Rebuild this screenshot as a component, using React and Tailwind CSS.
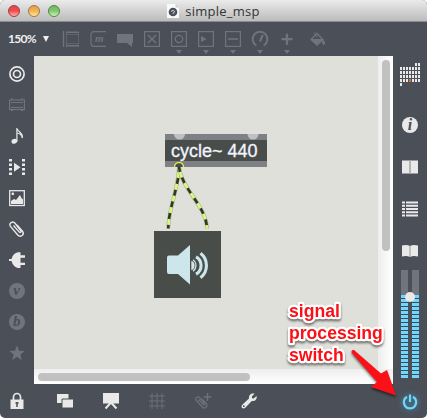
import React from "react";

function Icon({ children, className = "", size = 16 }) {
  return (
    <svg width={size} height={size} viewBox="0 0 16 16" fill="none" className={`block shrink-0 overflow-visible ${className}`}>
      {children}
    </svg>
  );
}

const square = <rect x=".6" y=".6" width="14.8" height="14.8" stroke="currentColor" strokeWidth="1.2" />;

const tools = [
  {
    art: (
      <g stroke="currentColor">
        <path d="M.5 0v16M3 1.300h13M3 14.700h13" strokeWidth="1.4" />
        <path d="M3 3.500h13M3 12.500h13M3.500 1v15M15.500 1v15" strokeWidth=".8" opacity=".7" />
      </g>
    ),
  },
  {
    art: (
      <>
        <path d="M16 .7H4Q1 .7 1 3.700v8.600Q1 15.300 4 15.300h12" stroke="currentColor" strokeWidth="1.2" />
        <text x="5" y="11.300" fill="currentColor" className="font-['Liberation_Serif',serif] text-[11px] font-bold italic">m</text>
      </>
    ),
  },
  { art: <path d="M0 3h16v9h-1v4l-5-4H0z" fill="currentColor" /> },
  { art: <>{square}<path d="M4 4l8 8M12 4l-8 8" stroke="currentColor" strokeWidth="1.4" /></> },
  { menu: true, art: <>{square}<circle cx="8" cy="8" r="3.700" stroke="currentColor" strokeWidth="1.3" /></> },
  { menu: true, art: <>{square}<path d="M3 5l5.500 3L3 11z" fill="currentColor" /></> },
  { menu: true, art: <>{square}<path d="M3 8h10" stroke="currentColor" strokeWidth="1.4" /></> },
  {
    menu: true,
    art: <path d="M4.300 14.500A7.400 7.400 0 1 1 11.700 14.500M8 10.500l2.700-6.500" stroke="currentColor" strokeWidth="2" />,
  },
  { menu: true, art: <path d="M8 2.700v11M2.500 8.200h11" stroke="currentColor" strokeWidth="2.300" /> },
];

const sideIcons = [
  { art: <g stroke="currentColor" strokeWidth="1.700"><circle cx="8" cy="8" r="7.100" /><circle cx="8" cy="8" r="3.500" /></g> },
  {
    dim: true,
    art: (
      <g stroke="currentColor">
        <rect x=".6" y="3" width="14.800" height="9.500" strokeWidth="1.200" />
        <path d="M2 5.500h12M2 10.500h12M2 1.900h2M12 1.900h2M2 13.500h2M12 13.500h2" />
      </g>
    ),
  },
  {
    art: (
      <g>
        <ellipse cx="5.400" cy="13.300" rx="3" ry="2.300" transform="rotate(-18 5.400 13.300)" fill="currentColor" />
        <path d="M7.900 13.300V0C8.500 4 14.800 5 13.200 10 13 7 10.500 5.500 8 5" stroke="currentColor" strokeWidth="1.200" />
      </g>
    ),
  },
  {
    art: (
      <g>
        <path d="M1.500 0v16M14.500 0v16" stroke="currentColor" strokeWidth="3" strokeDasharray="2.600 1.900" />
        <path d="M5 3.800l6.500 4.500L5 12.800z" fill="currentColor" />
      </g>
    ),
  },
  {
    art: (
      <g>
        <rect x=".7" y=".7" width="14.600" height="14.800" stroke="currentColor" strokeWidth="1.300" />
        <circle cx="3.800" cy="3.800" r="1.400" fill="currentColor" />
        <path d="M2 14v-3l3-2 2 1 4-5 1.500 3L14 9.500V14z" fill="currentColor" />
      </g>
    ),
  },
  {
    art: (
      <path d="M4.500 4.500l5.800 6.600c1 1 2.500-.2 1.500-1.400L6 2.200C4-.4-.6 2 1.300 5.200l7.200 8.500c3 3.400 7.400 0 5-3.500L8 4" stroke="currentColor" strokeWidth="1.400" />
    ),
  },
  { art: <path d="M0 7h2.500C3.500 3 6 1 9 .3h2.500v3H16v2.400h-4.500v5H16v2.400h-4.500v3H9C6 15.500 3.500 13 2.500 9H0z" fill="currentColor" /> },
  { dim: true, art: <Letter glyph="v" /> },
  { dim: true, art: <Letter glyph="b" /> },
  { dim: true, art: <path d="M8 .3l2 5.500 5.800.1-4.600 3.500 1.700 5.800L8 11.800l-4.900 3.400 1.700-5.800L.2 5.900 6 5.800z" fill="currentColor" /> },
];

function Letter({ glyph }) {
  return (
    <>
      <circle cx="8" cy="8" r="8" fill="currentColor" />
      <text x="7.700" y="12.300" textAnchor="middle" fill="#4b4f57" className="font-['Liberation_Serif',serif] text-[15px] font-bold italic">{glyph}</text>
    </>
  );
}

function TitleBar() {
  return (
    <header className="relative flex h-[22px] shrink-0 items-center justify-center border-b border-[#8b8b8b] bg-linear-to-b from-[#ebebeb] to-[#bcbcbc]">
      <div className="absolute left-2 top-[5px] flex gap-2">
        <i className="size-3 rounded-full border border-[#a13c3d] bg-linear-to-b from-[#dd4b50] via-[#ee4c50] to-[#ffb0aa]" />
        <i className="size-3 rounded-full border border-[#a8733b] bg-linear-to-b from-[#dfa04a] via-[#f2b554] to-[#ffe9a0]" />
        <i className="size-3 rounded-full border border-[#4d8843] bg-linear-to-b from-[#72b565] via-[#83c86f] to-[#cdf5b5]" />
      </div>
      <div className="flex items-center gap-[6px]">
        <svg width="12" height="14" viewBox="0 0 12 14" className="block">
          <path d="M0 0h8.500L12 3.500V14H0z" fill="#fafafa" />
          <path d="M8.500 0v3.500H12z" fill="#d0d0d0" />
          <circle cx="6" cy="8" r="4.300" fill="#4b4f57" />
          <path d="M4 7.200q2.500-1.500 3.700.2L5.800 10" stroke="#ddd" fill="none" />
        </svg>
        <span className="font-['Open_Sans',sans-serif] text-[13px] leading-[20px] tracking-[0.25px] text-[#333]">simple_msp</span>
      </div>
    </header>
  );
}

function Toolbar() {
  return (
    <div className="flex h-[34px] shrink-0 items-start pl-2 pt-[9px] text-[#70747d]">
      <span className="w-[35px] font-['Lato',sans-serif] text-[12px] font-bold leading-4 tracking-[-0.7px] text-[#f0f0f0]">150%</span>
      <svg width="6" height="6" viewBox="0 0 6 6" className="mr-[14px] mt-[5px] block"><path d="M0 0h6L3 6z" fill="#eee" /></svg>
      <div className="flex gap-[11px]">
        {tools.map((t, i) => (
          <div key={i} className="flex w-4 flex-col items-center gap-[3px]">
            <Icon>{t.art}</Icon>
            {t.menu && <svg width="6" height="4" viewBox="0 0 6 4" className="block"><path d="M0 0h6L3 4z" fill="currentColor" /></svg>}
          </div>
        ))}
        <Icon className="ml-[3px]">
          <path d="M1 8.500L8 1.500l7 7-7 6.500z" fill="currentColor" />
          <path d="M3.500 8L8 3.500 12.500 8z" fill="#4b4f57" />
          <path d="M5 1.500L8.500 6.500M14.500 9.500q2.500 3.500 0 4-2-.5 0-4" stroke="currentColor" fill="currentColor" />
        </Icon>
      </div>
    </div>
  );
}

function Patch() {
  return (
    <div className="relative h-[313px] w-[344px] bg-[#dfe0da]">
      <div className="absolute left-[131px] top-[78px] flex h-[33px] w-[102px] items-center border-y-[6px] border-[#7f8086] bg-[#484d4a] pl-[6px] pt-px font-['Liberation_Sans',sans-serif] text-[18px] leading-[21px] text-[#f2f4ff] [-webkit-text-stroke:0.3px_#f2f4ff]">
        <span className="whitespace-nowrap">cycle~ 440</span>
      </div>
      <div className="absolute left-[120px] top-[175px] flex size-[67px] items-center justify-center bg-[#484d4a]">
        <svg width="67" height="67" viewBox="0 0 67 67" fill="none" className="block">
          <path d="M15 24.500h9L36 14v39.500L24 43H15q-2 0-2-2V26.500q0-2 2-2z" fill="#cde6eb" />
          <path d="M37.300 29.800a5 5 0 0 1 0 9.400z" fill="#cde6eb" />
          <path d="M42 25.800a10 10 0 0 1 0 17.400M46.500 22.300a15.500 15.500 0 0 1 0 24.400" stroke="#cde6eb" strokeWidth="3.100" />
          <path d="M39 28.800a7 7 0 0 1 0 11.400" stroke="#cde6eb" strokeWidth="1.200" />
        </svg>
      </div>
      <svg width="344" height="313" viewBox="0 0 344 313" fill="none" className="absolute inset-0">
        <path d="M140 78a5.500 5.500 0 0 0 11 0M213.500 78a5.500 5.500 0 0 0 11 0" fill="#bfc0c4" />
        {["M145 110C145 132 134.500 151 134.300 172.500", "M145 110C147 133 172 149 173 172.500"].map((d) => (
          <g key={d}>
            <path d={d} stroke="#a5a99d" strokeWidth="3.800" />
            <path d={d} stroke="#d9fb78" strokeWidth="2.700" />
            <path d={d} stroke="#343727" strokeWidth="2.700" strokeDasharray="6 6" />
          </g>
        ))}
        <path d="M140.500 111a4.500 4.500 0 0 1 9 0" fill="#484d4a" stroke="#d8ec48" strokeWidth="1.500" />
      </svg>
    </div>
  );
}

function Canvas() {
  return (
    <main className="grid h-[328px] w-[359px] shrink-0 grid-cols-[344px_15px] grid-rows-[313px_15px] bg-[#fafafa]">
      <Patch />
      <div className="flex justify-center bg-linear-to-r from-[#eeeeee] to-white pt-1">
        <div className="h-[191px] w-2 rounded-full bg-[#c1c1c1]" />
      </div>
      <div className="col-span-2 bg-linear-to-b from-[#eeeeee] to-white pl-1 pt-1">
        <div className="h-2 w-[212px] rounded-full bg-[#c1c1c1]" />
      </div>
    </main>
  );
}

function Meter() {
  return (
    <div className="relative flex gap-1">
      {[0, 1].map((n) => (
        <div key={n} className="flex h-[108px] w-[7px] flex-col justify-end bg-[#70747c]">
          <div className="flex h-[83px] flex-col gap-px bg-[#414853]">
            {Array.from({ length: 21 }, (_, i) => <i key={i} className="h-[3px] shrink-0 bg-[#72d7fc]" />)}
          </div>
        </div>
      ))}
      <i className="absolute left-1 top-[22px] size-[10px] rounded-full bg-[#e9e9e9]" />
    </div>
  );
}

const calendarRows = ["0000011", "1111111", "1111111", "1111111", "1112111", "1000000"];

function RightBar() {
  return (
    <aside className="flex w-[34px] flex-col items-center text-[#e9e9e9]">
      <div className="mt-[7px] flex h-[41px] flex-col gap-px">
        {calendarRows.map((row, r) => (
          <div key={r} className="flex gap-px">
            {[...row].map((c, i) => (
              <i key={i} className={`h-[3px] w-[2px] ${c === "1" ? "bg-[#e9e9e9]" : c === "2" ? "bg-[#dd7417]" : ""}`} />
            ))}
          </div>
        ))}
      </div>
      <div className="flex h-[42px] items-center">
        <Icon>
          <circle cx="8" cy="8" r="8" fill="currentColor" />
          <text x="8" y="13" textAnchor="middle" fill="#4b4f57" className="font-['Liberation_Serif',serif] text-[16px] font-bold italic">i</text>
        </Icon>
      </div>
      <div className="flex h-[42px] items-center">
        <Icon><path d="M0 1.500h16v13H0z" fill="currentColor" /><path d="M8 1.500v13" stroke="#aaa" strokeWidth="1.700" /></Icon>
      </div>
      <div className="flex h-[42px] items-center">
        <Icon><path d="M0 1.500h3M4 1.500h12M0 4.700h3M4 4.700h12M0 8h3M4 8h12M0 11.300h3M4 11.300h12M0 14.500h3M4 14.500h12" stroke="currentColor" strokeWidth="1.900" /></Icon>
      </div>
      <div className="flex h-[40px] items-center pt-px">
        <Icon><path d="M0 2.500Q5 1.500 8 3 11 1.500 16 2.500v11Q11 12.500 8 14 5 12.500 0 13.500z" fill="currentColor" /><path d="M8 3v11" stroke="#999" /></Icon>
      </div>
      <Meter />
    </aside>
  );
}

function BottomBar() {
  return (
    <footer className="flex h-[34px] shrink-0 items-center pl-[9px] text-[#e9e9e9]">
      <Icon>
        <path d="M4.500 7V4a3.500 3.500 0 0 1 7 0v3" stroke="currentColor" strokeWidth="1.700" />
        <path d="M1.500 6.500h13V16h-13z" fill="currentColor" />
        <path d="M8 9v5M6.500 10h3" stroke="#4b4f57" strokeWidth="1.500" />
      </Icon>
      <div className="ml-8 flex gap-[30px]">
        <Icon>
          <path d="M0 1h11.500v9H0z" fill="currentColor" />
          <path d="M5 6h11.500v9H5z" fill="currentColor" stroke="#4b4f57" />
        </Icon>
        <Icon>
          <path d="M0 0h16v10.500H0z" fill="currentColor" />
          <path d="M8 9.500l-5.500 6M8 9.500l5.500 6" stroke="currentColor" strokeWidth="2" />
        </Icon>
        <Icon className="text-[#6d717a]"><path d="M3 0v16M8 0v16M13 0v16M0 3h16M0 8h16M0 13h16" stroke="currentColor" /></Icon>
        <Icon className="text-[#6d717a]">
          <path d="M3.500 6.500l5 5c1 .8 1.800 0 1-1L5 5C3 2.500-1 4.500 1.300 7.500l6 6.500c2.500 2.500 6-.5 4-3.500L7 6" stroke="currentColor" strokeWidth="1.200" />
          <path d="M12.500 0v8M8.500 4h8" stroke="currentColor" strokeWidth="1.600" />
        </Icon>
        <Icon>
          <path d="M13.500.8L10.800 3.500l.3 1.700 1.700.3L15.500 3C16.500 6 14 8.500 10.800 8L4.500 14.500C2 17-1 14 1.500 11.500L8 5.500C7.500 2 10.500-.2 13.500.8z" fill="currentColor" />
          <circle cx="2.800" cy="13.200" r=".9" fill="#4b4f57" />
        </Icon>
      </div>
      <Icon className="ml-auto mr-[9px] mt-px text-[#72d7fc] drop-shadow-[0_0_3px_#3b9dc3]">
        <path d="M5 2.800a6.200 6.200 0 1 0 6 0M8 .5v7.500" stroke="currentColor" strokeWidth="2.200" />
      </Icon>
    </footer>
  );
}

function Annotation() {
  return (
    <svg width="427" height="418" viewBox="0 0 427 418" className="pointer-events-none absolute inset-0 drop-shadow-[0_2px_1px_rgba(0,0,0,0.5)]">
      <g fill="#fb1017" stroke="white" strokeWidth="4.500" strokeLinejoin="round" paintOrder="stroke" className="font-['Liberation_Sans',sans-serif] text-[17.6px] font-bold">
        <text x="289" y="317">signal</text>
        <text x="289" y="339">processing</text>
        <text x="289" y="361">switch</text>
      </g>
      <path d="M354 350L381 373.500 387 370 396 395.500 371 387 377 382 351.500 352.500Q351 349.500 354 350z" fill="#fb1017" />
    </svg>
  );
}

export default function App() {
  return (
    <div className="relative flex h-[418px] w-[427px] flex-col overflow-hidden rounded-[5px] bg-[#4b4f57]">
      <TitleBar />
      <Toolbar />
      <div className="flex h-[328px]">
        <aside className="flex w-[34px] flex-col pt-[2px]">
          {sideIcons.map((s, i) => (
            <div key={i} className={`flex h-[31px] items-center justify-center ${s.dim ? "text-[#70747d]" : "text-[#e9e9e9]"}`}>
              <Icon>{s.art}</Icon>
            </div>
          ))}
        </aside>
        <Canvas />
        <RightBar />
      </div>
      <BottomBar />
      <Annotation />
    </div>
  );
}
